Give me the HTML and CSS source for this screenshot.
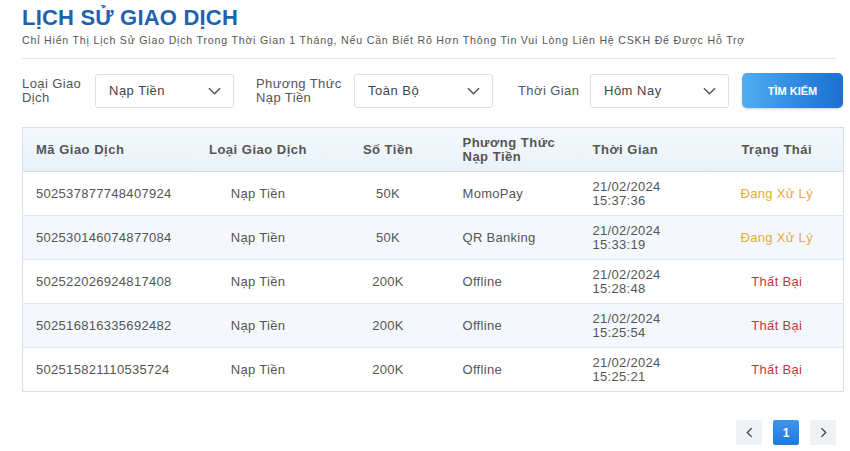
FILE: index.html
```html
<!DOCTYPE html>
<html lang="vi">
<head>
<meta charset="utf-8">
<link rel="stylesheet" href="styles.css">
</head>
<body>
<div class="page">
  <header class="head">
    <h1 class="title">LỊCH SỬ GIAO DỊCH</h1>
    <p class="subtitle">Chỉ Hiển Thị Lịch Sử Giao Dịch Trong Thời Gian 1 Tháng, Nếu Cần Biết Rõ Hơn Thông Tin Vui Lòng Liên Hệ CSKH Để Được Hỗ Trợ</p>
  </header>

  <div class="filters">
    <div class="field">
      <span class="label">Loại Giao<br>Dịch</span>
      <div class="select"><span>Nạp Tiền</span>
        <svg class="chev" viewBox="0 0 14 8" width="13" height="8"><path d="M1 1l6 6 6-6" fill="none" stroke="#555" stroke-width="1.5"/></svg>
      </div>
    </div>
    <div class="field">
      <span class="label">Phương Thức<br>Nạp Tiền</span>
      <div class="select"><span>Toàn Bộ</span>
        <svg class="chev" viewBox="0 0 14 8" width="13" height="8"><path d="M1 1l6 6 6-6" fill="none" stroke="#555" stroke-width="1.5"/></svg>
      </div>
    </div>
    <div class="field">
      <span class="label single">Thời Gian</span>
      <div class="select"><span>Hôm Nay</span>
        <svg class="chev" viewBox="0 0 14 8" width="13" height="8"><path d="M1 1l6 6 6-6" fill="none" stroke="#555" stroke-width="1.5"/></svg>
      </div>
    </div>
    <button class="btn">TÌM KIẾM</button>
  </div>

  <table class="tbl">
    <colgroup>
      <col class="c1"><col class="c2"><col class="c3"><col class="c4"><col class="c5"><col class="c6">
    </colgroup>
    <thead>
      <tr>
        <th class="left">Mã Giao Dịch</th>
        <th>Loại Giao Dịch</th>
        <th>Số Tiền</th>
        <th class="left">Phương Thức<br>Nạp Tiền</th>
        <th class="left">Thời Gian</th>
        <th>Trạng Thái</th>
      </tr>
    </thead>
    <tbody>
      <tr>
        <td class="left">502537877748407924</td><td>Nạp Tiền</td><td>50K</td><td class="left">MomoPay</td><td class="left">21/02/2024<br>15:37:36</td><td class="pending">Đang Xử Lý</td>
      </tr>
      <tr class="alt">
        <td class="left">502530146074877084</td><td>Nạp Tiền</td><td>50K</td><td class="left">QR Banking</td><td class="left">21/02/2024<br>15:33:19</td><td class="pending">Đang Xử Lý</td>
      </tr>
      <tr>
        <td class="left">502522026924817408</td><td>Nạp Tiền</td><td>200K</td><td class="left">Offline</td><td class="left">21/02/2024<br>15:28:48</td><td class="fail">Thất Bại</td>
      </tr>
      <tr class="alt">
        <td class="left">502516816335692482</td><td>Nạp Tiền</td><td>200K</td><td class="left">Offline</td><td class="left">21/02/2024<br>15:25:54</td><td class="fail">Thất Bại</td>
      </tr>
      <tr>
        <td class="left">502515821110535724</td><td>Nạp Tiền</td><td>200K</td><td class="left">Offline</td><td class="left">21/02/2024<br>15:25:21</td><td class="fail">Thất Bại</td>
      </tr>
    </tbody>
  </table>

  <nav class="pager">
    <span class="pg">
      <svg viewBox="0 0 8 12" width="7" height="11"><path d="M6.5 1L1.5 6l5 5" fill="none" stroke="#444" stroke-width="1.6"/></svg>
    </span>
    <span class="pg active">1</span>
    <span class="pg">
      <svg viewBox="0 0 8 12" width="7" height="11"><path d="M1.5 1l5 5-5 5" fill="none" stroke="#444" stroke-width="1.6"/></svg>
    </span>
  </nav>
</div>
</body>
</html>
```

FILE: styles.css
```css
* { box-sizing: border-box; }
html, body { margin: 0; padding: 0; background: #fff; }
body {
  font-family: "Liberation Sans", Arial, sans-serif;
  color: #444;
  width: 850px;
  height: 451px;
  overflow: hidden;
}
.page {
  padding: 5px 7px 0 22px;
}
.head {
  border-bottom: 1px solid #e6e6e6;
  padding-bottom: 12px;
  margin-right: 7px;
}
.title {
  margin: 0;
  font-size: 22px;
  line-height: 25px;
  font-weight: bold;
  color: #1f63ad;
  letter-spacing: 0.2px;
}
.subtitle {
  margin: 4px 0 0;
  font-size: 10.6px;
  line-height: 12px;
  letter-spacing: 0.8px;
  color: #555;
}
.filters {
  display: flex;
  align-items: center;
  margin-top: 14px;
  height: 35px;
}
.field {
  display: flex;
  align-items: center;
}
.label {
  font-size: 13px;
  line-height: 14px;
  letter-spacing: 0.4px;
  color: #555;
  width: 73px;
}
.field:nth-child(2) { margin-left: 22px; }
.field:nth-child(2) .label { width: 98px; }
.field:nth-child(3) { margin-left: 25px; }
.field:nth-child(3) .label { width: 72px; }
.select {
  width: 139px;
  height: 34px;
  border: 1px solid #dcdfe3;
  border-radius: 3px;
  display: flex;
  align-items: center;
  justify-content: space-between;
  padding: 0 12px 0 13px;
  font-size: 13px;
  letter-spacing: 0.5px;
  color: #444;
}
.btn {
  margin-left: 13px;
  width: 101px;
  height: 35px;
  border: none;
  border-radius: 5px;
  background: linear-gradient(90deg, #52aef0 0%, #2c86e0 60%, #1e6fd0 100%);
  color: #fff;
  font-family: "Liberation Sans", Arial, sans-serif;
  font-weight: bold;
  font-size: 11px;
  box-shadow: 0 1px 2px rgba(0,0,0,0.2);
}
.tbl {
  margin-top: 19px;
  width: 821px;
  border-collapse: collapse;
  table-layout: fixed;
  border: 1px solid #d5dfe8;
  font-size: 13px;
  letter-spacing: 0.3px;
  color: #555;
}
.c1 { width: 168px; }
.c2 { width: 135px; }
.c3 { width: 125px; }
.c4 { width: 130px; }
.c5 { width: 130px; }
.c6 { width: 133px; }
.tbl th {
  height: 44px;
  background: linear-gradient(180deg, #f4f8fc 0%, #e8f1f9 100%);
  font-weight: bold;
  color: #555;
  font-size: 13px;
  letter-spacing: 0.5px;
  line-height: 14px;
  text-align: center;
  border-bottom: 1px solid #d5dfe8;
}
.tbl td {
  height: 44px;
  text-align: center;
  border-top: 1px solid #dfe7ee;
  line-height: 14px;
}
.tbl .left { text-align: left; padding-left: 12px; }
.tbl th.left:first-child, .tbl td.left:first-child { padding-left: 13px; }
.tbl tr.alt td { background: #f4f8fc; }
.pending { color: #e5ab3e; }
.fail { color: #c9343a; }
.pager {
  display: flex;
  justify-content: flex-end;
  gap: 11px;
  margin-top: 28px;
  margin-right: 7px;
}
.pg {
  width: 26px;
  height: 25px;
  display: flex;
  align-items: center;
  justify-content: center;
  background: #eef2f6;
  border-radius: 2px;
  font-size: 12px;
  font-weight: bold;
  color: #fff;
}
.pg.active {
  background: linear-gradient(180deg, #3c97ee, #1f78dc);
}
```
